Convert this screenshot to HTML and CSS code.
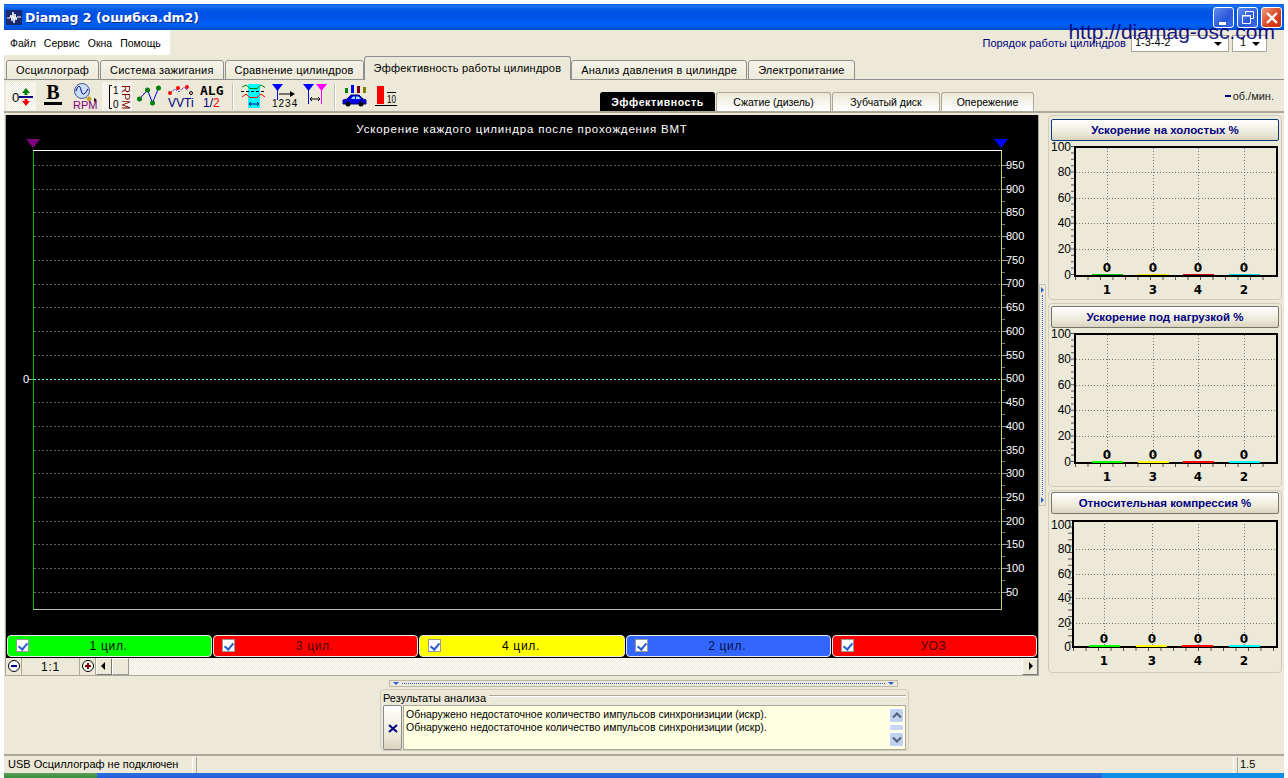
FILE: index.html
```html
<!doctype html>
<html lang="en">
  <head>
    <meta charset="UTF-8" />
    <title>Diamag 2</title>
    <link rel="stylesheet" href="styles.css">
  </head>
  <body>
    <div class="window">
      <div class="titlebar">
        <svg class="app-icon" width="16" height="15" viewBox="0 0 16 15">
          <rect width="16" height="15" fill="#1a2a6c" />
          <path d="M1 8H4L5 5L6 11L7 2L8 13L9 4L10 10L11 7H15" fill="none" stroke="#fff" />
        </svg>
        <span class="title-text">Diamag 2 (ошибка.dm2)</span>
        <div class="win-buttons">
          <span class="win-btn">
            <svg width="20" height="20" viewBox="0 0 20 20"><rect x="5" y="14" width="7" height="3" fill="#fff" /></svg>
          </span>
          <span class="win-btn">
            <svg width="20" height="20" viewBox="0 0 20 20"><path d="M7.5 6.5V3.5H15.5V10.5H12.5M4.5 7.5H12.5V15.5H4.5Z M4.5 8H12.5" fill="none" stroke="#fff" /></svg>
          </span>
          <span class="win-btn win-close">
            <svg width="20" height="20" viewBox="0 0 20 20"><path d="M5 5L15 15M15 5L5 15" stroke="#fff" stroke-width="2.4" /></svg>
          </span>
        </div>
      </div>

      <div class="menu-row">
        <div class="menu">
          <span>Файл</span><span>Сервис</span><span>Окна</span><span>Помощь</span>
        </div>
        <div class="order">
          <span class="order-label">Порядок работы цилиндров</span>
          <span class="combo combo-wide">1-3-4-2<i class="combo-arrow"></i></span>
          <span class="combo combo-small">1<i class="combo-arrow"></i></span>
        </div>
      </div>

      <div class="tab-row">
        <span class="tab">Осциллограф</span>
        <span class="tab">Система зажигания</span>
        <span class="tab">Сравнение цилиндров</span>
        <span class="tab tab-active">Эффективность работы цилиндров</span>
        <span class="tab">Анализ давления в цилиндре</span>
        <span class="tab">Электропитание</span>
      </div>

      <div class="toolbar">
        <span class="tool tool-on">
          <svg width="30" height="29" viewBox="0 0 30 29">
            <text x="6" y="20" class="ic-txt" font-size="13">0</text>
            <path d="M13 15H27" stroke="#000080" stroke-width="2" />
            <path d="M20 6L16 11H18.500V13H21.500V11H24Z" fill="#008000" />
            <path d="M20 24L16 19H18.500V17H21.500V19H24Z" fill="#f00" />
          </svg>
        </span>
        <span class="tool">
          <svg width="30" height="29" viewBox="0 0 30 29">
            <text x="15" y="17" class="ic-b" text-anchor="middle">B</text>
            <rect x="6" y="20" width="18" height="3" />
          </svg>
        </span>
        <span class="tool">
          <svg width="30" height="29" viewBox="0 0 30 29">
            <circle cx="13" cy="9" r="7.500" fill="#c8dcf4" stroke="#4a5a90" />
            <path d="M7 9C9 3 11 3 12 8S15 14 19 7" fill="none" stroke="#000080" />
            <path d="M20 14L23 17L20 20L17 17Z" fill="#c8a020" />
            <path d="M25 16L28 18L25 20Z" />
            <text x="4" y="27" class="ic-txt" font-size="11" fill="#800080">RPM</text>
          </svg>
        </span>
        <span class="tool tool-on tool-next">
          <svg width="30" height="29" viewBox="0 0 30 29">
            <path d="M10 3.500H7.500V26.500H10" fill="none" stroke="#000" />
            <text x="11" y="12" class="ic-txt" font-size="10">1</text>
            <text x="11" y="26" class="ic-txt" font-size="10">0</text>
            <text transform="translate(20 3) rotate(90)" class="ic-txt" font-size="11" fill="#800000">RPM</text>
          </svg>
        </span>
        <span class="tool tool-gap">
          <svg width="30" height="29" viewBox="0 0 30 29">
            <path d="M4.500 17L12.500 8L17.500 21L23.500 6" fill="none" stroke="#0000e0" />
            <circle cx="4.500" cy="17" r="2.500" fill="#008000" />
            <circle cx="12.500" cy="8" r="2.500" fill="#008000" />
            <circle cx="17.500" cy="21" r="2.500" fill="#008000" />
            <circle cx="23.500" cy="6" r="2.500" fill="#008000" />
          </svg>
        </span>
        <span class="tool">
          <svg width="30" height="29" viewBox="0 0 30 29">
            <path d="M4 11L9 7L13 10L18 5L22 9" fill="none" stroke="#0000e0" stroke-dasharray="1 1" />
            <circle cx="4" cy="11" r="2" fill="#f00" />
            <circle cx="12" cy="6" r="2" fill="#f00" />
            <circle cx="21" cy="5" r="2" fill="#f00" />
            <circle cx="25" cy="11" r="1.500" fill="none" stroke="#000" />
            <text x="2" y="25" class="ic-txt" font-size="12" fill="#000080">VVTi</text>
          </svg>
        </span>
        <span class="tool tool-alg">
          <svg width="31" height="29" viewBox="0 0 31 29">
            <text x="3" y="13" class="ic-mono">ALG</text>
            <text x="6" y="25" class="ic-txt" font-size="12" fill="#000080">1/<tspan fill="#f00">2</tspan></text>
          </svg>
        </span>
        <i class="tool-sep"></i>
        <span class="tool">
          <svg width="30" height="29" viewBox="0 0 30 29">
            <rect x="10" y="2" width="12" height="24" fill="#00ffff" />
            <path d="M4 5L8 3L12 6.500H19L23 3L27 5.500" fill="none" stroke="#008000" />
            <path d="M3 9.500H27" stroke="#000" stroke-dasharray="3 2" />
            <path d="M4 15L8 12L12 15.500H19L23 12L27 15" fill="none" stroke="#f00" />
            <path d="M11 22H21M13 20L11 22L13 24M19 20L21 22L19 24" fill="none" stroke="#000080" />
          </svg>
        </span>
        <span class="tool">
          <svg width="30" height="29" viewBox="0 0 30 29">
            <path d="M3 2H14L8.500 9Z" fill="#0000ff" />
            <path d="M8.500 8V18" stroke="#0000ff" />
            <path d="M10 12H22" stroke="#000" />
            <path d="M21 9L26 12L21 15Z" />
            <text x="3" y="25" class="ic-txt" font-size="10" letter-spacing="1">1234</text>
          </svg>
        </span>
        <span class="tool">
          <svg width="30" height="29" viewBox="0 0 30 29">
            <path d="M3 2H14L8.500 9Z" fill="#0000ff" />
            <path d="M8.500 8V22" stroke="#0000ff" />
            <path d="M16 2H27L21.500 9Z" fill="#ff00ff" />
            <path d="M21.500 8V22" stroke="#ff00ff" />
            <path d="M10 17H20M12 15L10 17L12 19M18 15L20 17L18 19" fill="none" stroke="#000" />
          </svg>
        </span>
        <i class="tool-sep"></i>
        <span class="tool">
          <svg width="30" height="29" viewBox="0 0 30 29">
            <rect x="5" y="6" width="3" height="5" fill="#008000" />
            <rect x="11" y="3" width="3" height="8" fill="#0000ff" />
            <rect x="17" y="4" width="3" height="7" fill="#800000" />
            <rect x="23" y="5" width="3" height="6" fill="#808000" />
            <path d="M3 22V18L7 17L11 13H19L23 17L26 18V22Z" fill="#0000e0" stroke="#000080" />
            <path d="M11 17L13 14.500H15V17ZM16 14.500H18.500L21 17H16Z" fill="#9fe8ff" />
            <circle cx="8" cy="22" r="2.500" />
            <circle cx="21" cy="22" r="2.500" />
          </svg>
        </span>
        <span class="tool">
          <svg width="30" height="29" viewBox="0 0 30 29">
            <rect x="6" y="4" width="7" height="18" fill="#f00" />
            <path d="M4 23.500H26M16 10.500H25" stroke="#000" />
            <text x="16" y="21" class="ic-txt" font-size="11" textLength="9" lengthAdjust="spacingAndGlyphs">10</text>
          </svg>
        </span>

        <div class="subtabs">
          <span class="subtab subtab-active">Эффективность</span>
          <span class="subtab subtab-w1">Сжатие (дизель)</span>
          <span class="subtab subtab-w2">Зубчатый диск</span>
          <span class="subtab subtab-w3">Опережение</span>
        </div>
        <span class="rpm-unit"><i class="rpm-dash"></i>об./мин.</span>
      </div>

      <div class="workspace">
        <div class="left-col">
          <div class="scope-frame">
            <svg class="scope" width="1032" height="520" viewBox="0 0 1032 520">
              <text x="516" y="18" class="scope-title" text-anchor="middle">Ускорение каждого цилиндра после прохождения ВМТ</text>
              <path d="M20 24H34L27 33Z" fill="#800080" />
              <path d="M988 24H1002L995 33Z" fill="#0000ff" />
              <path class="scope-grid" d="M28 50.500H995M28 74.500H995M28 97.500H995M28 121.500H995M28 145.500H995M28 169.500H995M28 192.500H995M28 216.500H995M28 240.500H995M28 287.500H995M28 311.500H995M28 335.500H995M28 358.500H995M28 382.500H995M28 406.500H995M28 429.500H995M28 453.500H995M28 477.500H995" />
              <path d="M22 264.500H28" stroke="#999" />
              <path d="M28 264.500H995" stroke="#5ff" stroke-dasharray="2 2" />
              <path d="M996 50.500H1002M996 74.500H1002M996 97.500H1002M996 121.500H1002M996 145.500H1002M996 169.500H1002M996 192.500H1002M996 216.500H1002M996 240.500H1002M996 264.500H1002M996 287.500H1002M996 311.500H1002M996 335.500H1002M996 358.500H1002M996 382.500H1002M996 406.500H1002M996 429.500H1002M996 453.500H1002M996 477.500H1002" stroke="#999" />
              <path class="scope-minor" d="M996 62.500H999M996 86.500H999M996 109.500H999M996 133.500H999M996 157.500H999M996 180.500H999M996 204.500H999M996 228.500H999M996 252.500H999M996 275.500H999M996 299.500H999M996 323.500H999M996 346.500H999M996 370.500H999M996 394.500H999M996 417.500H999M996 441.500H999M996 465.500H999" />
              <path d="M27.500 36V495" stroke="#00c000" />
              <path d="M995.500 36V495" stroke="#c8d060" />
              <path d="M27 35.500H996" stroke="#fff" />
              <path d="M27 494.500H996" stroke="#b8c0b8" />
              <g class="scope-label">
                <text x="17" y="268">0</text>
                <text x="1000" y="54">950</text>
                <text x="1000" y="78">900</text>
                <text x="1000" y="101">850</text>
                <text x="1000" y="125">800</text>
                <text x="1000" y="149">750</text>
                <text x="1000" y="172">700</text>
                <text x="1000" y="196">650</text>
                <text x="1000" y="220">600</text>
                <text x="1000" y="244">550</text>
                <text x="1000" y="267">500</text>
                <text x="1000" y="291">450</text>
                <text x="1000" y="315">400</text>
                <text x="1000" y="339">350</text>
                <text x="1000" y="362">300</text>
                <text x="1000" y="386">250</text>
                <text x="1000" y="410">200</text>
                <text x="1000" y="433">150</text>
                <text x="1000" y="457">100</text>
                <text x="1000" y="481">50</text>
              </g>
            </svg>
            <div class="legend">
              <span class="cyl cyl-green"><i class="check"></i>1 цил.</span>
              <span class="cyl cyl-red"><i class="check"></i>3 цил.</span>
              <span class="cyl cyl-yellow"><i class="check"></i>4 цил.</span>
              <span class="cyl cyl-blue"><i class="check"></i>2 цил.</span>
              <span class="cyl cyl-red"><i class="check"></i>УОЗ</span>
            </div>
            <div class="scrollbar">
              <span class="zoom-btn">
                <svg width="14" height="14" viewBox="0 0 14 14"><circle cx="7" cy="7" r="5.500" fill="#fff" stroke="#000" /><path d="M4 7H10" stroke="#000080" stroke-width="2" /></svg>
              </span>
              <span class="zoom-value">1:1</span>
              <span class="zoom-btn zoom-plus">
                <svg width="14" height="14" viewBox="0 0 14 14"><circle cx="7" cy="7" r="5.500" fill="#fff" stroke="#000" /><path d="M4 7H10M7 4V10" stroke="#800000" stroke-width="2" /></svg>
              </span>
              <span class="arrow-btn arrow-left"></span>
              <span class="thumb"></span>
              <span class="arrow-btn arrow-right"></span>
            </div>
          </div>

          <div class="h-splitter"><i class="tri-down"></i><i class="dots"></i><i class="tri-down"></i></div>

          <div class="results">
            <div class="results-head"><span>Результаты анализа</span><i></i></div>
            <div class="results-body">
              <span class="results-close">
                <svg width="10" height="10" viewBox="0 0 10 10"><path d="M1 2L9 9M9 2L1 9" stroke="#000080" stroke-width="2" /></svg>
              </span>
              <div class="results-text">
                <div class="results-lines">
                  <div>Обнаружено недостаточное количество импульсов синхронизиции (искр).</div>
                  <div>Обнаружено недостаточное количество импульсов синхронизиции (искр).</div>
                </div>
                <div class="results-scroll">
                  <span class="sb-btn"><svg width="10" height="7" viewBox="0 0 10 7"><path d="M1 5.500L5 1.500L9 5.500" fill="none" stroke="#4d6185" stroke-width="2" /></svg></span>
                  <span class="sb-thumb"></span>
                  <span class="sb-btn"><svg width="10" height="7" viewBox="0 0 10 7"><path d="M1 1.500L5 5.500L9 1.500" fill="none" stroke="#4d6185" stroke-width="2" /></svg></span>
                </div>
              </div>
            </div>
          </div>
        </div>

        <div class="v-splitter"><i class="tri-right"></i><i class="dots-v"></i><i class="tri-right"></i></div>

        <div class="side-col">
          <section class="panel panel-one">
            <button class="panel-head panel-head-on">Ускорение на холостых %</button>
            <svg width="232" height="157" viewBox="0 0 232 157">
              <path class="bar-grid" d="M27 31.500H227M27 57.500H227M27 82.500H227M27 108.500H227M58.500 7V134M104.500 7V134M149.500 7V134M195.500 7V134" />
              <path class="tick-y" d="M24 5V135" />
              <path class="tick-x" d="M26 137H226" />
              <rect x="43" y="133" width="31" height="2" fill="#00c800" />
              <rect x="89" y="133" width="31" height="2" fill="#e8e800" />
              <rect x="134" y="133" width="31" height="2" fill="#d00000" />
              <rect x="180" y="133" width="31" height="2" fill="#00d8d8" />
              <rect class="plot" x="26" y="6" width="202" height="129" />
              <g class="axis-y">
                <text x="22" y="10">100</text><text x="22" y="35">80</text><text x="22" y="61">60</text><text x="22" y="86">40</text><text x="22" y="112">20</text><text x="22" y="138">0</text>
              </g>
              <g class="bar-val">
                <text x="58" y="131">0</text><text x="104" y="131">0</text><text x="149" y="131">0</text><text x="195" y="131">0</text>
              </g>
              <g class="bar-cat">
                <text x="58" y="153">1</text><text x="104" y="153">3</text><text x="149" y="153">4</text><text x="195" y="153">2</text>
              </g>
            </svg>
          </section>

          <section class="panel panel-two">
            <button class="panel-head">Ускорение под нагрузкой %</button>
            <svg width="232" height="157" viewBox="0 0 232 157">
              <path class="bar-grid" d="M27 31.500H227M27 57.500H227M27 82.500H227M27 108.500H227M58.500 7V134M104.500 7V134M149.500 7V134M195.500 7V134" />
              <path class="tick-y" d="M24 5V135" />
              <path class="tick-x" d="M26 137H226" />
              <rect class="plot" x="26" y="6" width="202" height="129" />
              <rect x="43" y="133" width="31" height="2" fill="#00ff00" />
              <rect x="89" y="133" width="31" height="2" fill="#ffff00" />
              <rect x="134" y="133" width="31" height="2" fill="#ff0000" />
              <rect x="180" y="133" width="31" height="2" fill="#00ffff" />
              <g class="axis-y">
                <text x="22" y="10">100</text><text x="22" y="35">80</text><text x="22" y="61">60</text><text x="22" y="86">40</text><text x="22" y="112">20</text><text x="22" y="138">0</text>
              </g>
              <g class="bar-val">
                <text x="58" y="131">0</text><text x="104" y="131">0</text><text x="149" y="131">0</text><text x="195" y="131">0</text>
              </g>
              <g class="bar-cat">
                <text x="58" y="153">1</text><text x="104" y="153">3</text><text x="149" y="153">4</text><text x="195" y="153">2</text>
              </g>
            </svg>
          </section>

          <section class="panel panel-three">
            <button class="panel-head">Относительная компрессия %</button>
            <svg width="232" height="157" viewBox="0 0 232 157">
              <path class="bar-grid" d="M24 35.500H227M24 60.500H227M24 84.500H227M24 109.500H227M55.500 7V132M103.500 7V132M149.500 7V132M195.500 7V132" />
              <path class="tick-y" d="M21 6V133" />
              <path class="tick-x" d="M24 135H226" />
              <rect class="plot" x="24" y="7" width="204" height="126" />
              <rect x="40" y="131" width="31" height="2" fill="#00ff00" />
              <rect x="87" y="131" width="31" height="2" fill="#ffff00" />
              <rect x="133" y="131" width="31" height="2" fill="#ff0000" />
              <rect x="180" y="131" width="31" height="2" fill="#00ffff" />
              <g class="axis-y">
                <text x="22" y="15">100</text><text x="22" y="39">80</text><text x="22" y="64">60</text><text x="22" y="88">40</text><text x="22" y="113">20</text><text x="22" y="137">0</text>
              </g>
              <g class="bar-val">
                <text x="55" y="129">0</text><text x="103" y="129">0</text><text x="149" y="129">0</text><text x="195" y="129">0</text>
              </g>
              <g class="bar-cat">
                <text x="55" y="151">1</text><text x="103" y="151">3</text><text x="149" y="151">4</text><text x="195" y="151">2</text>
              </g>
            </svg>
          </section>
        </div>
      </div>

      <div class="statusbar">
        <span class="status-cell status-first">USB Осциллограф не подключен</span>
        <span class="status-cell status-mid"></span>
        <span class="status-cell status-last">1.5</span>
      </div>
      <div class="taskbar"><i class="task-start"></i><i class="task-tray"></i></div>

      <div class="watermark">http://diamag-osc.com</div>
    </div>
  </body>
</html>
```

FILE: styles.css
```css
:root {
  --face: #ece9d8;
  --edge: #aca899;
  --tab-edge: #8e8f8f;
  --navy: #000080;
  --checker: repeating-conic-gradient(#ece9d8 0 25%, #fff 0 50%) 0 0 / 2px 2px;
}

* {
  box-sizing: border-box;
}

body {
  margin: 0;
  background: #fff;
  font-family: "Liberation Sans", Arial, sans-serif;
  font-size: 11px;
  color: #000;
}

i {
  display: block;
}

svg {
  display: block;
}

.window {
  position: relative;
  width: 1280px;
  height: 774px;
  margin: 4px 4px 0;
  background: var(--face);
  display: flex;
  flex-direction: column;
  overflow: hidden;
}

/* title bar */
.titlebar {
  height: 26px;
  flex: none;
  display: flex;
  align-items: center;
  padding-left: 2px;
  background: linear-gradient(#0a5ce0 0, #1d74f0 8%, #0460e8 18%, #0054e3 30%, #0055eb 60%, #0060f6 78%, #0058e4 90%, #0048c0 100%);
}

.app-icon {
  margin-right: 3px;
}

.title-text {
  color: #fff;
  font-family: "DejaVu Sans", sans-serif;
  font-weight: bold;
  font-size: 12.5px;
  text-shadow: 1px 1px 0 #0f2f90;
}

.win-buttons {
  margin-left: auto;
  margin-right: 2px;
  display: flex;
  gap: 3px;
}

.win-btn {
  width: 21px;
  height: 21px;
  border: 1px solid #fff;
  border-radius: 3px;
  background: linear-gradient(135deg, #5f8cf2, #2a58d8 60%, #3c6cec);
}

.win-close {
  background: linear-gradient(135deg, #ee9a7c, #d8401c 60%, #c83010);
}

/* menu row */
.menu-row {
  height: 25px;
  flex: none;
  display: flex;
  justify-content: space-between;
}

.menu {
  width: 166px;
  background: #fff;
  display: flex;
  align-items: center;
  gap: 8px;
  padding-left: 6px;
  font-size: 10.5px;
}

.order {
  display: flex;
  align-items: flex-start;
  padding: 5px 17px 0 0;
}

.order-label {
  color: var(--navy);
  margin: 2px 5px 0 0;
  letter-spacing: 0.05px;
}

.combo {
  position: relative;
  display: block;
  height: 17px;
  background: #fff;
  border: 1px solid var(--edge);
  padding-left: 3px;
  line-height: 12px;
}

.combo-wide {
  width: 98px;
  margin-right: 3px;
}

.combo-small {
  width: 35px;
  padding-left: 7px;
}

.combo-arrow {
  position: absolute;
  right: 6px;
  top: 6px;
  border-top: 4px solid #000;
  border-left: 4px solid transparent;
  border-right: 4px solid transparent;
}

/* page tabs */
.tab-row {
  height: 25px;
  flex: none;
  display: flex;
  align-items: flex-end;
  padding-left: 2px;
  gap: 1px;
  border-bottom: 1px solid var(--tab-edge);
}

.tab {
  height: 20px;
  margin-bottom: -1px;
  border: 1px solid var(--tab-edge);
  border-radius: 3px 3px 0 0;
  padding: 3px 9px 0;
  background: linear-gradient(#f6f4ea, var(--face));
  white-space: nowrap;
  letter-spacing: 0.2px;
}

.tab-active {
  height: 24px;
  margin-left: -1px;
  margin-right: -1px;
  padding-top: 5px;
  background: var(--face);
  border-bottom: 0;
}

/* toolbar */
.toolbar {
  height: 33px;
  flex: none;
  display: flex;
  align-items: flex-start;
  padding: 2px 0 0 2px;
  border-bottom: 2px solid var(--edge);
}

.tool {
  width: 30px;
  height: 29px;
  margin-right: 1px;
}

.tool-on {
  background: var(--checker);
  margin-right: 2px;
}

.tool-next {
  margin-left: 2px;
}

.tool-alg {
  width: 31px;
}

.tool-gap {
  margin-left: 1px;
}

.tool-sep {
  width: 2px;
  height: 27px;
  margin: 1px 4px 0 3px;
  background: #c5c2b0;
  border-right: 1px solid #fff;
}

.ic-txt {
  font-family: "Liberation Sans", sans-serif;
}

.ic-b {
  font-family: "Liberation Serif", serif;
  font-weight: bold;
  font-size: 20px;
}

.ic-mono {
  font-family: "DejaVu Sans Mono", monospace;
  font-weight: bold;
  font-size: 13px;
}

.subtabs {
  display: flex;
  margin-left: 198px;
  margin-top: 10px;
  gap: 1px;
}

.subtab {
  height: 19px;
  width: 115px;
  border: 1px solid var(--edge);
  border-bottom: 0;
  border-radius: 3px 3px 0 0;
  background: linear-gradient(var(--face), #fff);
  text-align: center;
  line-height: 19px;
  font-size: 10.5px;
}

.subtab-active {
  background: #000;
  border-color: #000;
  color: #fff;
  font-weight: bold;
  letter-spacing: 0.6px;
}

.subtab-w1 {
  width: 115px;
}

.subtab-w2 {
  width: 108px;
}

.subtab-w3 {
  width: 93px;
}

.rpm-unit {
  margin-left: auto;
  margin-right: 10px;
  margin-top: 8px;
  display: flex;
  align-items: center;
  color: #222;
}

.rpm-dash {
  width: 6px;
  height: 2px;
  margin-right: 2px;
  background: var(--navy);
}

/* workspace */
.workspace {
  flex: 1;
  display: flex;
  padding-top: 2px;
  min-height: 0;
}

.left-col {
  width: 1035px;
  flex: none;
  padding-left: 1px;
}

.scope-frame {
  width: 1034px;
  border-left: 1px solid var(--edge);
  border-right: 1px solid var(--edge);
  border-bottom: 1px solid var(--edge);
}

.scope {
  background: #000;
}

.scope-title {
  fill: #fff;
  font-size: 11.500px;
  letter-spacing: 0.8px;
}

.scope-grid {
  stroke: #5c5c5c;
  stroke-dasharray: 2 2;
}

.scope-minor {
  stroke: #777;
}

.scope-label {
  fill: #fff;
  font-size: 11px;
}

.legend {
  height: 23px;
  background: #000;
  display: flex;
  gap: 1px;
  padding: 0 1px 1px 1px;
}

.cyl {
  flex: 1;
  position: relative;
  border: 1px solid #e8e8e8;
  border-radius: 4px;
  text-align: center;
  line-height: 20px;
  font-size: 12px;
  letter-spacing: 0.7px;
  padding-right: 2px;
}

.cyl-green {
  background: #00ff00;
}

.cyl-red {
  background: #ff0000;
  color: #400;
}

.cyl-yellow {
  background: #ffff00;
}

.cyl-blue {
  background: #3366ff;
  color: #001040;
}

.check {
  position: absolute;
  left: 8px;
  top: 3px;
  width: 13px;
  height: 13px;
  background: #fff;
  border: 1px solid #999;
}

.check::after {
  content: "";
  position: absolute;
  left: 3px;
  top: 1px;
  width: 4px;
  height: 7px;
  border-right: 2px solid #2a5fd0;
  border-bottom: 2px solid #2a5fd0;
  transform: rotate(40deg);
}

.scrollbar {
  height: 17px;
  display: flex;
  align-items: center;
  background: var(--checker);
}

.zoom-btn {
  width: 16px;
  height: 17px;
  padding: 1px;
  background: var(--face);
  border-right: 1px solid var(--edge);
}

.zoom-value {
  width: 58px;
  height: 17px;
  background: var(--face);
  border-right: 1px solid var(--edge);
  text-align: center;
  font-size: 12px;
  letter-spacing: 0.8px;
  line-height: 19px;
}

.arrow-btn {
  position: relative;
  width: 16px;
  height: 17px;
  background: var(--face);
  border: 1px solid #fff;
  border-right-color: #777;
  border-bottom-color: #777;
}

.arrow-btn::after {
  content: "";
  position: absolute;
  top: 3px;
  left: 4px;
  border-top: 4px solid transparent;
  border-bottom: 4px solid transparent;
}

.arrow-left::after {
  border-right: 4px solid #000;
}

.arrow-right {
  margin-left: auto;
}

.arrow-right::after {
  border-left: 4px solid #000;
  left: 6px;
}

.thumb {
  width: 17px;
  height: 17px;
  background: var(--face);
  border: 1px solid #fff;
  border-right-color: #999;
  border-bottom-color: #999;
}

.h-splitter {
  width: 509px;
  height: 7px;
  margin: 4px 0 2px 384px;
  border: 1px solid #bbb8a8;
  display: flex;
  align-items: center;
  padding: 0 3px;
  gap: 3px;
}

.tri-down {
  border-top: 3px solid #2a5fd0;
  border-left: 3px solid transparent;
  border-right: 3px solid transparent;
}

.dots {
  flex: 1;
  border-top: 1px dotted #2a5fd0;
}

.results {
  width: 529px;
  height: 62px;
  margin-left: 375px;
  border: 1px solid #cfccbc;
  border-radius: 4px;
  padding: 1px 2px 0;
}

.results-head {
  height: 13px;
  display: flex;
  align-items: center;
  gap: 3px;
  font-size: 11px;
}

.results-head i {
  flex: 1;
  height: 2px;
  margin-top: -4px;
  border-top: 1px solid var(--edge);
  border-bottom: 1px solid #fff;
}

.results-body {
  display: flex;
  height: 45px;
  margin-top: 1px;
}

.results-close {
  width: 19px;
  height: 45px;
  border: 1px solid #888;
  border-radius: 2px;
  background: linear-gradient(#fff, var(--face) 70%, #d8d4c0);
  display: flex;
  align-items: center;
  justify-content: center;
}

.results-text {
  flex: 1;
  display: flex;
  background: #ffffe1;
  border: 1px solid var(--edge);
  margin-left: 1px;
  font-size: 10.500px;
  line-height: 13px;
  padding-left: 2px;
}

.results-lines {
  flex: 1;
  padding-top: 2px;
}

.results-scroll {
  width: 17px;
  padding: 2px 1px;
  display: flex;
  flex-direction: column;
  gap: 1px;
}

.sb-btn {
  height: 15px;
  display: flex;
  align-items: center;
  justify-content: center;
  border: 1px solid #fff;
  border-radius: 2px;
  background: #c1d2ee;
}

.sb-thumb {
  height: 7px;
  border: 1px solid #fff;
  border-radius: 2px;
  background: #c8d6f0;
}

.v-splitter {
  width: 7px;
  height: 222px;
  margin-top: 169px;
  flex: none;
  border: 1px solid #c8c5b4;
  display: flex;
  flex-direction: column;
  align-items: center;
  padding: 2px 0;
  gap: 2px;
}

.tri-right {
  border-left: 3px solid #2a5fd0;
  border-top: 3px solid transparent;
  border-bottom: 3px solid transparent;
}

.dots-v {
  flex: 1;
  border-left: 1px dotted #2a5fd0;
}

/* side charts */
.side-col {
  width: 234px;
  margin-left: 2px;
  display: flex;
  flex-direction: column;
  gap: 3px;
}

.panel {
  border: 1px solid #cfccbc;
  border-radius: 4px;
  padding: 3px 2px 0;
  overflow: hidden;
}

.panel-one {
  height: 185px;
}

.panel-two {
  height: 184px;
  padding-top: 2px;
}

.panel-three {
  height: 183px;
  padding-top: 1px;
}

.panel svg {
  margin-left: -2px;
}

.panel-head {
  display: block;
  width: 228px;
  height: 22px;
  padding: 0;
  border: 1px solid #77766a;
  border-radius: 2px;
  background: linear-gradient(#fff, var(--face) 65%, #d8d4c0);
  color: var(--navy);
  font-family: "Liberation Sans", sans-serif;
  font-weight: bold;
  font-size: 11.500px;
}

.panel-head-on {
  border-color: #0a3a78;
}

.bar-grid {
  stroke: #777;
  stroke-dasharray: 1 2;
  fill: none;
}

.tick-y {
  stroke: #555;
  stroke-width: 4;
  stroke-dasharray: 1 5.400;
  fill: none;
}

.tick-x {
  stroke: #555;
  stroke-width: 4;
  stroke-dasharray: 1 11.500;
  fill: none;
}

.plot {
  fill: none;
  stroke: #000;
  stroke-width: 2;
}

.axis-y text {
  font-size: 12px;
  text-anchor: end;
}

.bar-val text {
  font-family: "DejaVu Sans", sans-serif;
  font-weight: bold;
  font-size: 12px;
  text-anchor: middle;
}

.bar-cat text {
  font-family: "DejaVu Sans", sans-serif;
  font-weight: bold;
  font-size: 12px;
  text-anchor: middle;
}

/* bottom */
.statusbar {
  height: 19px;
  flex: none;
  display: flex;
  border-top: 2px solid var(--edge);
  padding-top: 1px;
}

.status-cell {
  height: 16px;
  border-right: 1px solid #fff;
  line-height: 15px;
  padding-left: 4px;
  font-size: 11px;
}

.status-first {
  width: 189px;
}

.status-mid {
  flex: 1;
  margin-left: 3px;
  border-left: 1px solid var(--edge);
}

.status-last {
  width: 47px;
  margin-left: 3px;
  border-left: 1px solid var(--edge);
  border-right: 0;
  padding-left: 2px;
}

.taskbar {
  height: 5px;
  flex: none;
  display: flex;
  justify-content: space-between;
  background: linear-gradient(#2f6be0, #245edb);
}

.task-start {
  width: 93px;
  background: linear-gradient(#5aa05a, #388a38);
}

.task-tray {
  width: 182px;
  background: #0f8ee5;
}

.watermark {
  position: absolute;
  right: 9px;
  top: 16px;
  color: #00007a;
  font-size: 21px;
  line-height: 24px;
  pointer-events: none;
  opacity: 0.9;
}
```
